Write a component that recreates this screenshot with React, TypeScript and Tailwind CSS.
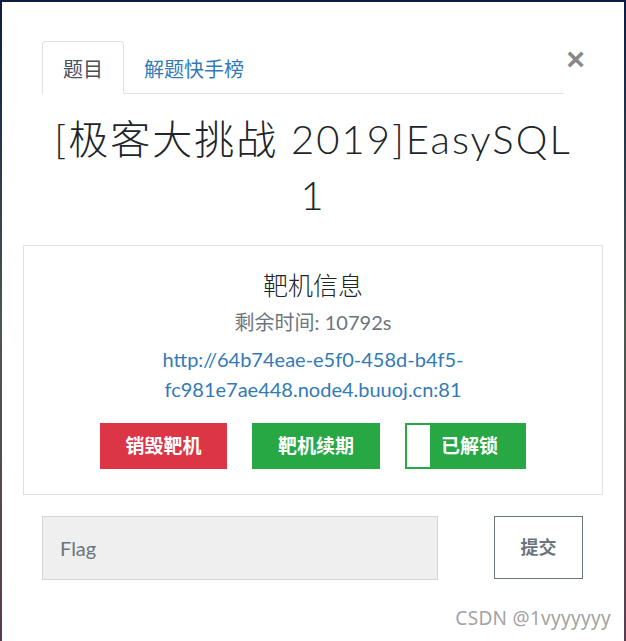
const sans = { fontFamily: '"Lato", "Noto Sans CJK SC", sans-serif' };

export default function App() {
  return (
    <div className="h-[641px] w-[626px] overflow-hidden bg-gradient-to-b from-[#0b1b45] via-[#4c5750] to-[#5a3c50] px-[2px] pt-[2px]">
      <div
        className="relative h-full bg-white px-[21px] text-[#212529]"
        style={sans}
      >
        {/* Header: tabs + close */}
        <div className="flex items-start pl-[19px] pr-[18px] pt-[39px]">
          <ul className="flex flex-1 border-b border-[#dee2e6]">
            <li className="-mb-px flex h-[53px] items-center rounded-t-[4px] border border-[#dee2e6] border-b-white bg-white px-[20px] pt-[3px] text-[20px] text-[#495057]">
              题目
            </li>
            <li className="flex h-[52px] items-center px-[20px] pt-[3px] text-[20px] text-[#337ab7]">
              解题快手榜
            </li>
          </ul>
          <button
            className="ml-[2px] mt-[2px] text-[32px] font-bold leading-none text-[#888]"
            style={{ fontFamily: '"Liberation Sans", sans-serif' }}
          >
            ×
          </button>
        </div>

        {/* Title */}
        <h1 className="mt-[17px] text-center text-[40px] font-light leading-[56px] tracking-[2px] text-[#212529]">
          [极客大挑战 2019]EasySQL
          <br />1
        </h1>

        {/* Instance box */}
        <div className="mt-[22px] flex h-[250px] flex-col items-center border border-[#dee2e6] pt-[24px]">
          <h3 className="text-[25px] font-light leading-[30px] text-[#212529]">靶机信息</h3>
          <p className="mt-[7px] text-[20px] leading-[30px] text-[#6c757d]">
            剩余时间: 10792s
          </p>
          <a className="mt-[7px] block w-[330px] text-center text-[20px] leading-[30px] text-[#337ab7]">
            http://64b74eae-e5f0-458d-b4f5-fc981e7ae448.node4.buuoj.cn:81
          </a>
          <div className="mt-[19px] flex gap-[25px]">
            <button className="flex h-[46px] w-[127px] items-center justify-center bg-[#dc3545] text-[19px] font-bold text-white">
              销毁靶机
            </button>
            <button className="flex h-[46px] w-[128px] items-center justify-center bg-[#28a745] text-[19px] font-bold text-white">
              靶机续期
            </button>
            <button className="flex h-[46px] w-[121px] items-stretch border-[2px] border-[#28a745] bg-[#28a745] text-[19px] font-bold text-white">
              <span className="w-[23px] bg-white" />
              <span className="ml-[11px] flex items-center">已解锁</span>
            </button>
          </div>
        </div>

        {/* Flag input */}
        <div className="ml-[19px] mr-[20px] mt-[21px] flex items-stretch justify-between">
          <div className="flex h-[64px] w-[396px] items-center border border-[#ced4da] bg-[#efefef] pl-[17px] text-[20px] text-[#6c757d]">
            Flag
          </div>
          <button className="h-[63px] w-[89px] border border-[#6c757d] bg-white text-[18px] font-bold text-[#6c757d]">
            提交
          </button>
        </div>

        <span
          className="absolute bottom-[9px] right-[13px] text-[19px] tracking-[0.3px] text-[#a3a3a3]"
          style={{ fontFamily: '"Noto Sans", "Noto Sans CJK SC", sans-serif' }}
        >
          CSDN @1vyyyyyy
        </span>
      </div>
    </div>
  );
}
